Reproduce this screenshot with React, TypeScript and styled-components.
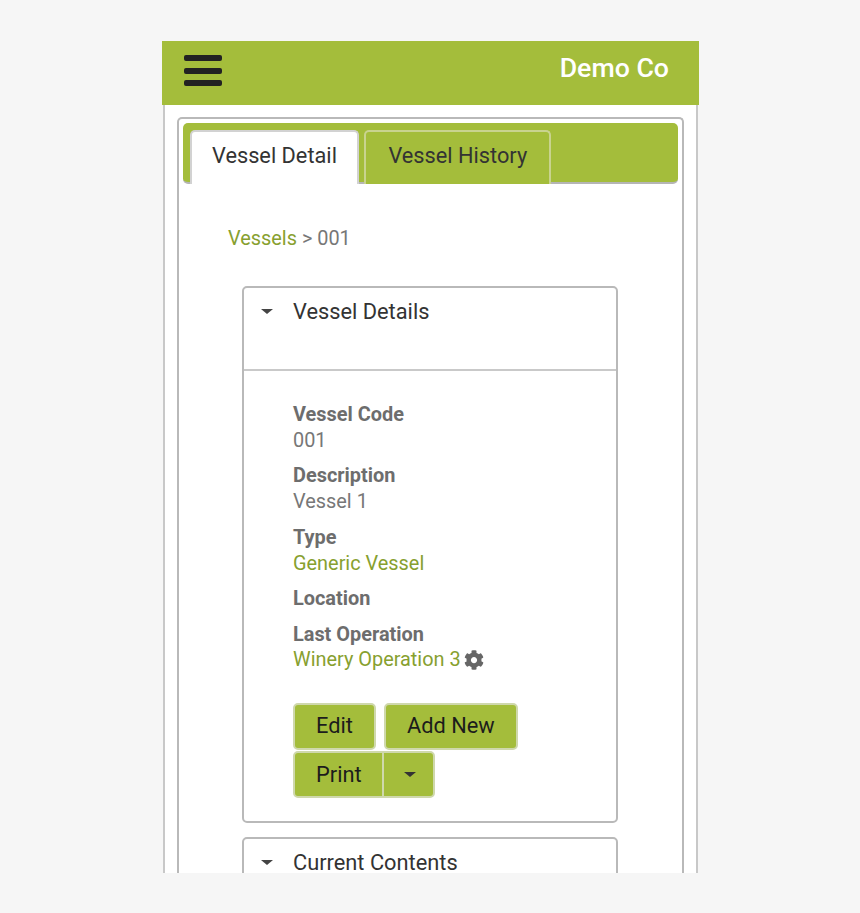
import React from "react";
import styled, { createGlobalStyle } from "styled-components";
import { FaCog } from "react-icons/fa";

const Global = createGlobalStyle`
  html, body { margin: 0; padding: 0; background: #f6f6f6; }
  body { font-family: Roboto, "Liberation Sans", sans-serif; }
  * { box-sizing: border-box; }
`;
const GREEN = "#a4bd3b";
const Page = styled.div`
  width: 860px; height: 913px; padding: 41px 0 0 162px; overflow: hidden; background: #f6f6f6;
`;
const Screen = styled.div`
  width: 537px; height: 832px; overflow: hidden; display: flex; flex-direction: column;
`;
const Header = styled.header`
  flex: none; height: 64px; background: ${GREEN}; display: flex; align-items: flex-start; justify-content: space-between;
  padding: 13px 30px 0 22px;
`;
const Burger = styled.div`
  width: 38px; display: flex; flex-direction: column; gap: 6.5px; margin-top: 1px;
  span { display: block; height: 6px; border-radius: 2px; background: #222; }
`;
const Brand = styled.div`
  color: #fff; font-size: 26.7px; font-weight: 500; line-height: 28px; white-space: nowrap;
`;
const Body = styled.div`
  flex: 1; margin: 0 1px; background: #fff; border-left: 2px solid #c8c8c8; border-right: 2px solid #c8c8c8; padding: 12px 12px 0 12px;
  min-height: 0;
`;
const Panel = styled.div`
  border: 2px solid #b9b9b9; border-bottom: 0; border-radius: 5px 5px 0 0; padding: 4px 4px 0 4px; height: 800px;
`;
const TabBar = styled.div`
  height: 61px; background: ${GREEN}; border-radius: 5px; border-bottom: 2px solid #b5b5b5; padding: 7px 0 0 7px; display: flex; gap: 5px; align-items: stretch;
`;
const Tab = styled.div<{ $active?: boolean }>`
  height: 54px; margin-bottom: -2px; padding: 0 ${(p) => (p.$active ? "20.5px 0 20px" : "22px")}; font-size: 21.75px; line-height: 47px; white-space: nowrap;
  border-radius: 5px 5px 0 0; color: #333;
  border: 2px solid ${(p) => (p.$active ? "#d2d2d2" : "#c9d38f")};
  border-bottom: 0;
  background: ${(p) => (p.$active ? "#fff" : GREEN)};
`;
const Content = styled.div`
  padding: 41px 0 0 45px;
`;
const Crumbs = styled.div`
  font-size: 19.9px; line-height: 28px; color: #777; white-space: nowrap;
`;
const GreenLink = styled.span`
  color: #87a02f;
`;
const Card = styled.section<{ $gap?: boolean }>`
  width: 376px; margin: ${(p) => (p.$gap ? "14px" : "33px")} 0 0 14px; border: 2px solid #b9b9b9; border-radius: 5px;
`;
const CardHead = styled.div`
  height: 81px; display: flex; align-items: flex-start; padding: 10px 0 0 17px; font-size: 21.8px; line-height: 28px; color: #333;
`;
const Caret = styled.span`
  width: 0; height: 0; border-left: 6px solid transparent; border-right: 6px solid transparent; border-top: 5.5px solid #444;
  margin-top: 11px; margin-right: 20px; flex: none;
`;
const Divider = styled.div`
  height: 2px; background: #c9c9c9;
`;
const CardBody = styled.div`
  padding: 31px 0 23px 49px;
`;
const Field = styled.div`
  margin-bottom: 10.3px; font-size: 19.9px; line-height: 25.6px; color: #777;
`;
const Label = styled.div`
  font-weight: 700; color: #6d6d6d;
`;
const OpLine = styled.div`
  display: flex; align-items: center; gap: 3px; height: 24.6px;
`;
const Buttons = styled.div`
  margin-top: 30px; display: flex; flex-direction: column; gap: 1px;
`;
const BtnRow = styled.div`
  display: flex; gap: 8px;
`;
const Btn = styled.button`
  height: 47px; padding: 0 21px; background: ${GREEN}; border: 2px solid #cfd8ac; border-radius: 5px; color: #1c1c1c;
  font: 400 21.8px/24px Roboto, sans-serif;
`;
const Split = styled.div`
  display: flex; height: 47px; width: 142px; background: ${GREEN}; border: 2px solid #cfd8ac; border-radius: 5px;
`;
const SplitMain = styled.div`
  width: 89px; padding-left: 21px; font-size: 21.8px; line-height: 43px; color: #1c1c1c; border-right: 2px solid #cfd8ac;
`;
const SplitCaret = styled.div`
  flex: 1; display: flex; align-items: center; justify-content: center;
  ${Caret} { margin: 0 0 0 2px; border-top-color: #333; }
`;

export default function App() {
  return (
    <Page>
      <Global />
      <Screen>
        <Header>
          <Burger><span /><span /><span /></Burger>
          <Brand>Demo Co</Brand>
        </Header>
        <Body>
          <Panel>
            <TabBar>
              <Tab $active>Vessel Detail</Tab>
              <Tab>Vessel History</Tab>
            </TabBar>
            <Content>
              <Crumbs><GreenLink>Vessels</GreenLink> &gt; 001</Crumbs>
              <Card>
                <CardHead><Caret />Vessel Details</CardHead>
                <Divider />
                <CardBody>
                  <Field><Label>Vessel Code</Label>001</Field>
                  <Field><Label>Description</Label>Vessel 1</Field>
                  <Field><Label>Type</Label><GreenLink>Generic Vessel</GreenLink></Field>
                  <Field><Label>Location</Label></Field>
                  <Field>
                    <Label>Last Operation</Label>
                    <OpLine><GreenLink>Winery Operation 3</GreenLink><FaCog size={20} color="#666" /></OpLine>
                  </Field>
                  <Buttons>
                    <BtnRow><Btn>Edit</Btn><Btn>Add New</Btn></BtnRow>
                    <Split><SplitMain>Print</SplitMain><SplitCaret><Caret /></SplitCaret></Split>
                  </Buttons>
                </CardBody>
              </Card>
              <Card $gap>
                <CardHead><Caret />Current Contents</CardHead>
              </Card>
            </Content>
          </Panel>
        </Body>
      </Screen>
    </Page>
  );
}
